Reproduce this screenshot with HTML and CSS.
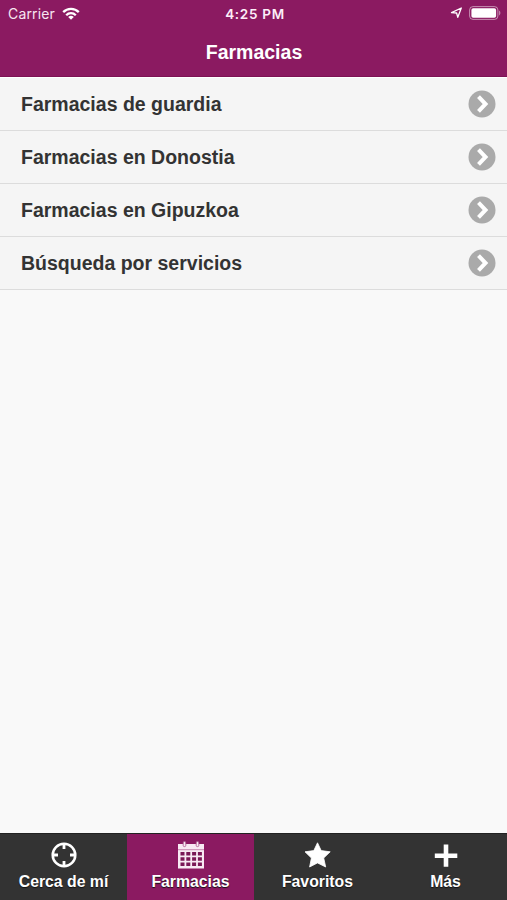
FILE: index.html
```html
<!DOCTYPE html>
<html lang="es">
<head>
<meta charset="utf-8">
<title>Farmacias</title>
<link rel="stylesheet" href="styles.css">
</head>
<body>
<div class="app">
  <header class="header">
    <div class="status">
      <div class="status-left">
        <span class="carrier">Carrier</span>
        <svg class="wifi" viewBox="0 0 18 13" width="18" height="13"><g fill="none" stroke="#fff" stroke-width="2.3"><path d="M1.2 5.1a11 11 0 0 1 15.6 0"/><path d="M4.200 8.200a6.800 6.800 0 0 1 9.600 0"/></g><path fill="#fff" d="M6.200 10a4 4 0 0 1 5.600 0L9 12.800z"/></svg>
      </div>
      <span class="time">4:25 PM</span>
      <div class="status-right">
        <svg viewBox="0 0 13 12" width="13" height="12"><path d="M1.500 5.700 11.300 1 7.800 10.300 6.600 6z" fill="none" stroke="#fff" stroke-width="1.300" stroke-linejoin="round"/></svg>
        <svg viewBox="0 0 33 14" width="33" height="14"><rect x=".6" y=".6" width="28.300" height="12.800" rx="3.400" fill="none" stroke="#fff" stroke-opacity=".5"/><rect x="2.400" y="2.300" width="24.700" height="9.400" rx="1.800" fill="#fff"/><path d="M30.200 4.600c1.500.7 1.500 4.100 0 4.800z" fill="#fff" fill-opacity=".55"/></svg>
      </div>
    </div>
    <h1 class="title">Farmacias</h1>
  </header>
  <main class="list">
    <a class="row"><span>Farmacias de guardia</span><svg class="chevron" viewBox="0 0 28 28"><circle cx="14" cy="14" r="13.5"/><path d="M10.500 6.700 17.500 14 10.500 21.300"/></svg></a>
    <a class="row"><span>Farmacias en Donostia</span><svg class="chevron" viewBox="0 0 28 28"><circle cx="14" cy="14" r="13.5"/><path d="M10.500 6.700 17.500 14 10.500 21.300"/></svg></a>
    <a class="row"><span>Farmacias en Gipuzkoa</span><svg class="chevron" viewBox="0 0 28 28"><circle cx="14" cy="14" r="13.5"/><path d="M10.500 6.700 17.500 14 10.500 21.300"/></svg></a>
    <a class="row"><span>Búsqueda por servicios</span><svg class="chevron" viewBox="0 0 28 28"><circle cx="14" cy="14" r="13.5"/><path d="M10.500 6.700 17.500 14 10.500 21.300"/></svg></a>
  </main>
  <nav class="tabs">
    <a class="tab">
      <svg viewBox="0 0 28 28"><g fill="none" stroke="#fff"><circle cx="14" cy="14" r="11.300" stroke-width="2.500"/><path stroke-width="2.800" d="M14 3v5M14 20v5M3 14h5M20 14h5"/></g></svg>
      <span>Cerca de mí</span>
    </a>
    <a class="tab active">
      <svg viewBox="0 0 28 28"><path fill="#f8eaf3" d="M1 3h26v24.500H1z"/><path stroke="#c78ab0" stroke-width="1" d="M1 8.700h26"/><g fill="#7a1856"><path d="M3.500 11h4v3.500h-4zM9.300 11h4v3.500h-4zM15.100 11h4v3.500h-4zM20.900 11h4v3.500h-4zM3.500 16.300h4v3.500h-4zM9.300 16.300h4v3.500h-4zM15.100 16.300h4v3.500h-4zM20.900 16.300h4v3.500h-4zM3.500 21.600h4v3.500h-4zM9.300 21.600h4v3.500h-4zM15.100 21.600h4v3.500h-4zM20.900 21.600h4v3.500h-4z"/></g><g fill="#f8eaf3" stroke="#a65088" stroke-width=".8"><rect x="6.200" y=".6" width="2.600" height="5" rx="1.200"/><rect x="19.200" y=".6" width="2.600" height="5" rx="1.200"/></g></svg>
      <span>Farmacias</span>
    </a>
    <a class="tab">
      <svg viewBox="0 0 28 28"><path fill="#fff" stroke="#fff" stroke-width=".8" stroke-linejoin="round" d="M13.500 1.800 17.200 9.600 26.200 10.800 19.700 17 21.700 26 13.500 21.900 5.600 26 7.400 17 1 10.800 9.800 9.600z"/></svg>
      <span>Favoritos</span>
    </a>
    <a class="tab">
      <svg viewBox="0 0 28 28"><path fill="#fff" d="M11.700 3.500h4.600v9h9v4.600h-9v8.700h-4.600v-8.700H2.800v-4.600h8.900z"/></svg>
      <span>Más</span>
    </a>
  </nav>
</div>
</body>
</html>
```
FILE: styles.css
```css
* { box-sizing: border-box; }
body { margin: 0; font-family: "Liberation Sans", Arial, sans-serif; }
.app { height: 900px; display: flex; flex-direction: column; background: #f9f9f9; }
.header { height: 77px; background: #8b1a61; border-bottom: 1px solid #7d1254; color: #fff; }
.status { height: 27px; padding: 0 5px 0 8px; display: grid; grid-template-columns: 1fr auto 1fr; align-items: center; font-family: Inter, sans-serif; font-size: 14px; line-height: 18px; }
.status-left { display: flex; align-items: center; gap: 7px; }
.carrier { letter-spacing: .15px; color: #f7e6f1; }
.time { font-weight: 600; font-size: 13.5px; letter-spacing: .7px; color: #fdeef8; }
.status-right { display: flex; align-items: center; justify-content: flex-end; gap: 6px; padding-bottom: 1px; }
.title { margin: 0; padding: 13px 0 0 1px; text-align: center; font-size: 19.5px; line-height: 24px; }
.list { flex: 1; }
.row { height: 53px; padding: 0 10px 0 21px; display: flex; align-items: center; justify-content: space-between; background: #f5f5f5; border-bottom: 1px solid #dcdcdc; color: #333; font-size: 19.5px; font-weight: 700; line-height: 24px; }
.row:first-child { border-top: 1px solid #fff; height: 54px; }
.chevron { width: 28px; height: 28px; margin-right: 1px; fill: #aaa; }
.chevron path { fill: none; stroke: #fff; stroke-width: 4; }
.tabs { height: 67px; display: grid; grid-template-columns: 127px 127px 127px 1fr; background: #333; border-top: 1px solid #222; }
.tab { display: flex; flex-direction: column; align-items: center; padding-top: 7px; color: #fff; font-size: 15.8px; font-weight: 700; line-height: 20px; text-shadow: 0 1px 1px #111; }
.tab:last-child { padding-left: 3px; }
.tab svg { width: 28px; height: 28px; margin-bottom: 3px; }
.active { background: #8b1a61; }
```
